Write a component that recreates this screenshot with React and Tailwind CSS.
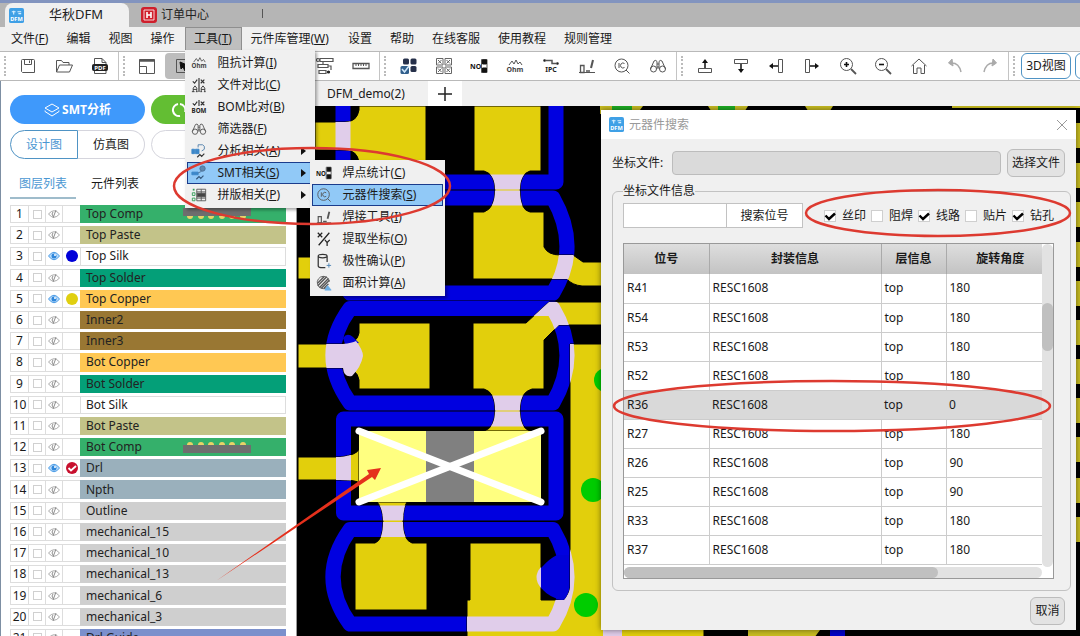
import { useState } from 'react';
import clsx from 'clsx';

const layers = [
  { name: 'Top Comp', color: 'bg-[#35b06b]', strip: 'top' },
  { name: 'Top Paste', color: 'bg-[#c3c389]' },
  { name: 'Top Silk', color: 'bg-white', visible: true, dot: 'bg-[#0000d8]' },
  { name: 'Top Solder', color: 'bg-[#049f78]' },
  { name: 'Top Copper', color: 'bg-[#ffc853]', visible: true, dot: 'bg-[#e0cf10]' },
  { name: 'Inner2', color: 'bg-[#997733]' },
  { name: 'Inner3', color: 'bg-[#997733]' },
  { name: 'Bot Copper', color: 'bg-[#ffc853]' },
  { name: 'Bot Solder', color: 'bg-[#049f78]' },
  { name: 'Bot Silk', color: 'bg-white' },
  { name: 'Bot Paste', color: 'bg-[#c3c389]' },
  { name: 'Bot Comp', color: 'bg-[#35b06b]', strip: 'bottom' },
  { name: 'Drl', color: 'bg-[#9ab0bc]', visible: true, active: true },
  { name: 'Npth', color: 'bg-[#9ab0bc]' },
  { name: 'Outline', color: 'bg-[#cfcfcf]' },
  { name: 'mechanical_15', color: 'bg-[#cfcfcf]' },
  { name: 'mechanical_10', color: 'bg-[#cfcfcf]' },
  { name: 'mechanical_13', color: 'bg-[#cfcfcf]' },
  { name: 'mechanical_6', color: 'bg-[#cfcfcf]' },
  { name: 'mechanical_3', color: 'bg-[#cfcfcf]' },
  { name: 'Drl Guide', color: 'bg-[#7b90cc]' },
];

const parts = [
  ['R41', 'RESC1608', 'top', '180'],
  ['R54', 'RESC1608', 'top', '180'],
  ['R53', 'RESC1608', 'top', '180'],
  ['R52', 'RESC1608', 'top', '180'],
  ['R36', 'RESC1608', 'top', '0'],
  ['R27', 'RESC1608', 'top', '180'],
  ['R26', 'RESC1608', 'top', '90'],
  ['R25', 'RESC1608', 'top', '90'],
  ['R33', 'RESC1608', 'top', '180'],
  ['R37', 'RESC1608', 'top', '180'],
];

const toolMenu = [
  { icon: 'ohm', label: '阻抗计算', hotkey: 'I' },
  { icon: 'compare', label: '文件对比', hotkey: 'C' },
  { icon: 'bom', label: 'BOM比对', hotkey: 'B' },
  { icon: 'binoculars', label: '筛选器', hotkey: 'F' },
  { icon: 'analysis', label: '分析相关', hotkey: 'A', sub: true },
  { icon: 'smt', label: 'SMT相关', hotkey: 'S', sub: true, active: true },
  { icon: 'panel', label: '拼版相关', hotkey: 'P', sub: true },
];

const smtMenu = [
  { icon: 'no', label: '焊点统计', hotkey: 'C' },
  { icon: 'ic', label: '元器件搜索', hotkey: 'S', active: true },
  { icon: 'iron', label: '焊接工具', hotkey: 'I' },
  { icon: 'xy', label: '提取坐标', hotkey: 'O' },
  { icon: 'polarity', label: '极性确认', hotkey: 'P' },
  { icon: 'area', label: '面积计算', hotkey: 'A' },
];

const toolbar = [
  { width: 'w-[119px]', icons: ['save', 'open', 'pdf'] },
  { width: 'w-[261px]', icons: ['layout', 'select', 'blank', 'blank', 'blank', 'route', 'ruler'] },
  { width: 'w-[297px]', icons: ['parts', 'grid', 'no', 'ohm', 'ipc', 'iron', 'ic', 'binoculars'] },
  { width: 'w-[332px]', icons: ['moveUp', 'moveDown', 'moveLeft', 'moveRight', 'zoomIn', 'zoomOut', 'home', 'undo', 'redo'] },
];

// all glyphs are drawn on an 18x18 grid
const glyphs = {
  blank: null,
  save: (
    <>
      <path d="M2.500 3.500a1 1 0 0 1 1-1h11a1 1 0 0 1 1 1v12h-12l-1-1z" />
      <path d="M5.500 2.500v5h7v-5M10.500 3.500v2.500" />
    </>
  ),
  open: (
    <>
      <path d="M1.500 15V3.500h5l1.500 2h6V8" />
      <path d="M1.500 15 4.500 8h13l-3 7z" />
    </>
  ),
  pdf: (
    <>
      <path d="M3.500 8V1.500h7.500l4 4V8M3.500 13v3.500h11.500V13M11 1.500v4h4" />
      <rect x="1.500" y="7.500" width="15" height="6" rx="1" fill="#222" stroke="#222" />
      <text x="9" y="12.500" fontSize="6" fontWeight="700" textAnchor="middle" fill="#fff" stroke="none">PDF</text>
    </>
  ),
  layout: (
    <>
      <path d="M1.500 2.500h15v14h-15zM1.500 9.500h7v7" />
      <path d="M1.500 3.500h15" strokeWidth="2.500" />
    </>
  ),
  select: (
    <>
      <path d="M2.500 2.500h13v13h-13z" />
      <path d="M6 5l7 3-3 1 3 4-2 1-2-4-2 2z" fill="#111" stroke="#111" />
    </>
  ),
  route: (
    <g strokeWidth="1.200">
      <circle cx="2" cy="3" r="1.500" />
      <path d="M4 1.500h13v3H4zM7 4.500v3M2 7.500h10v3H2zM12 9h3v4M3 13.500h7v3H3z" />
      <circle cx="12.500" cy="15" r="1" fill="#222" stroke="#222" />
    </g>
  ),
  ruler: (
    <>
      <path d="M1 6.500h16v5H1z" strokeWidth="1.300" />
      <path d="M4 7v2M6.500 7v2M9 7v2M11.500 7v2M14 7v2" />
    </>
  ),
  parts: (
    <g stroke="none" fill="#26304a">
      <rect x="4" y="1.500" width="6" height="6" rx="1.500" />
      <rect x="11.500" y="1.500" width="6" height="6" rx="1.500" />
      <rect x="11.500" y="9" width="6" height="6" rx="1.500" />
      <rect x="1.500" y="9" width="8.500" height="8" rx="1.500" fill="#315f8c" />
      <path d="M3 12l2.500 3L10 9" fill="none" stroke="#cfe6fa" strokeWidth="1.500" />
    </g>
  ),
  grid: (
    <g stroke="#666">
      <path d="M1.500 1.500h6.500v6.500h-6.500zM10 1.500h6.500v6.500h-6.500zM1.500 10h6.500v6.500h-6.500zM10 10h6.500v6.500h-6.500z" />
      <path d="M3 3l3.500 3.500M6.500 3 3 6.500M11.500 3l3.500 3.500M15 3l-3.500 3.500M3 11.500l3.500 3.500M6.500 11.500 3 15M11.500 11.500l3.500 3.500M15 11.500l-3.500 3.500" />
    </g>
  ),
  no: (
    <>
      <text x="0" y="12" fontSize="7" fontWeight="700" fill="#111" stroke="none">NO</text>
      <path d="M11.500 2.500h5.500v13h-5.500z" />
      <path d="M12.500 3h4v4h-4zM12.500 11h4v4h-4z" fill="#111" stroke="#111" />
    </>
  ),
  ohm: (
    <>
      <path d="M3 8l3-4 2 3 2-4 2 4 2-2 2 3" />
      <text x="9" y="14.500" fontSize="7" fontWeight="700" textAnchor="middle" fill="#444" stroke="none">Ohm</text>
    </>
  ),
  ipc: (
    <>
      <path d="M2 3.500h8v3h6" strokeWidth="1.500" />
      <circle cx="2.500" cy="3.500" r="1" fill="#222" />
      <circle cx="15.500" cy="6.500" r="1" fill="#222" />
      <text x="9" y="15" fontSize="7" fontWeight="700" textAnchor="middle" fill="#222" stroke="none">IPC</text>
    </>
  ),
  iron: (
    <>
      <path d="M1 15.500h16" />
      <path d="M2.500 8.500h3.500v7h-3.500zM8 14h4" strokeWidth="1.300" />
      <path d="M15 3l-2 8" strokeWidth="2" />
    </>
  ),
  ic: (
    <>
      <circle cx="8.500" cy="8.500" r="6.500" />
      <path d="M13 13l3.500 3.500M6 6v5M11.500 6.500a2.500 2.500 0 1 0 0 4" />
    </>
  ),
  binoculars: (
    <>
      <circle cx="4.500" cy="12" r="3" />
      <circle cx="13.500" cy="12" r="3" />
      <path d="M1.500 12 5 4q2-1.500 3 .5V12M16.500 12 13 4q-2-1.500-3 .5V12M8 7h2M8 10h2" />
    </>
  ),
  moveUp: (
    <>
      <path d="M2.500 11.500h13v4h-13z" />
      <path d="M9 11V4" stroke="#111" strokeWidth="1.500" />
      <path d="M9 2l3 4H6z" fill="#111" stroke="none" />
    </>
  ),
  moveDown: (
    <>
      <path d="M2.500 2.500h13v4h-13z" />
      <path d="M9 7v6" stroke="#111" strokeWidth="1.500" />
      <path d="M9 16l3-4H6z" fill="#111" stroke="none" />
    </>
  ),
  moveLeft: (
    <>
      <path d="M11.500 2.500h4v13h-4z" />
      <path d="M11 9H5" stroke="#111" strokeWidth="1.500" />
      <path d="M2 9l4-3v6z" fill="#111" stroke="none" />
    </>
  ),
  moveRight: (
    <>
      <path d="M2.500 2.500h4v13h-4z" />
      <path d="M7 9h6" stroke="#111" strokeWidth="1.500" />
      <path d="M16 9l-4-3v6z" fill="#111" stroke="none" />
    </>
  ),
  zoomIn: (
    <>
      <circle cx="7.500" cy="7.500" r="6" />
      <path d="M12 12l5 5" strokeWidth="1.800" />
      <path d="M5 7.500h5M7.500 5v5" stroke="#111" strokeWidth="1.600" />
    </>
  ),
  zoomOut: (
    <>
      <circle cx="7.500" cy="7.500" r="6" />
      <path d="M12 12l5 5" strokeWidth="1.800" />
      <path d="M5 7.500h5" stroke="#111" strokeWidth="1.600" />
    </>
  ),
  home: (
    <path d="M1.500 9 9 2l7.500 7M3.500 8v8.500h3.500v-5.500h4v5.500h3.500V8" />
  ),
  undo: (
    <g stroke="#aaa">
      <path d="M4 6q9-1 11 9" strokeWidth="1.500" />
      <path d="M6 2 2.500 6 7 9z" fill="#aaa" />
    </g>
  ),
  redo: (
    <g stroke="#aaa">
      <path d="M14 6Q5 5 3 15" strokeWidth="1.500" />
      <path d="M12 2l3.500 4L11 9z" fill="#aaa" />
    </g>
  ),
  compare: (
    <g stroke="#333">
      <path d="M9 1v16M2 5l2 2 3-4M11 3l4 4M15 3l-4 4" strokeWidth="1.300" />
      <path d="M2.500 16.500v-4l2-2.500 2 2.500v4M11.500 16.500v-4l2-2.500 2 2.500v4M2.500 14h4M11.500 14h4M1 16.500h3M5.500 16.500h2M10.500 16.500h2M14.500 16.500h2" />
    </g>
  ),
  bom: (
    <>
      <path d="M2 5l2 2 3-4M9 1v7M11 3l4 4M15 3l-4 4" stroke="#333" strokeWidth="1.300" />
      <text x="9" y="16" fontSize="7" fontWeight="700" textAnchor="middle" fill="#222" stroke="none">BOM</text>
    </>
  ),
  analysis: (
    <>
      <path d="M1 7h3v5H1zM5 7h4v5H5z" fill="#3c87c9" stroke="#3c87c9" />
      <path d="M8 2h5q3 1 2 5l-3 2M8 2v3" stroke="#4c7ca8" />
      <path d="M7 16l3-3 2 2 3-3" stroke="#333" strokeWidth="1.300" />
    </>
  ),
  smt: (
    <>
      <path d="M1 8h7v3H1z" fill="#3c87c9" stroke="#3c87c9" />
      <circle cx="13" cy="4" r="3" fill="#5d88b0" stroke="#4b6f94" />
      <path d="M8 9l4-2" stroke="#4b6f94" />
      <path d="M6 16l3-3 2 2 3-3" stroke="#33567a" strokeWidth="1.300" />
    </>
  ),
  panel: (
    <>
      <path d="M6.500 2.500h10v13h-10zM6.500 5.500h10M11.500 2.500v13M6.500 12.500h10" />
      <path d="M7 7h9v4H7z" fill="#444" />
      <path d="M1.500 6.500h3v3h-3zM1.500 12.500h3v3h-3z" stroke="#2f9c56" />
      <path d="M2 3h2" stroke="#2f9c56" strokeWidth="2" />
    </>
  ),
  xy: (
    <path d="M2 2l5 5M7 2 2 7M15 2 3 16M10 10l2.500 3 3-3M12.500 13v4" stroke="#222" strokeWidth="1.400" />
  ),
  polarity: (
    <>
      <path d="M2.500 3.500v11q0 2 5 2h3M2.500 3.500q0-2 5-2t5 2q0 2-5 2t-5-2M12.500 3.500V10" stroke="#333" strokeWidth="1.400" />
      <path d="M12 14h5M14.500 11.500v5" stroke="#4c83b5" />
    </>
  ),
  area: (
    <>
      <path d="M8 1.500a7 7 0 1 0 4 13M8 1.500q6 0 7 6" />
      <path d="M2 9l7-7M2 12 12 2M4 14 14 4M6 15l9-9M9 15l5-5" strokeWidth="1.500" />
      <path d="M10 17l3-5 4 5z" fill="#6eb0e6" stroke="#6eb0e6" />
    </>
  ),
};

function Glyph({ name, className }) {
  return (
    <svg viewBox="0 0 18 18" className={className} fill="none" stroke="#555" strokeWidth="1" aria-hidden="true">
      {glyphs[name]}
    </svg>
  );
}

function Logo({ className }) {
  return (
    <svg viewBox="0 0 16 16" className={className} aria-hidden="true">
      <rect width="16" height="16" rx="2" fill="#3fa0e6" />
      <path d="M3 4h4M5 3v4M9 4h4M10 6h3" stroke="#d9efff" strokeWidth="1.200" />
      <text x="8" y="13.500" fontSize="6" fontWeight="700" textAnchor="middle" fill="#fff">DFM</text>
    </svg>
  );
}

function TitleBar() {
  return (
    <div className="flex h-[27px] flex-none items-stretch border-t-[3px] border-[#8294bf] bg-[#b5b5b5] pl-[5px]">
      <button className="flex w-[124px] items-center rounded-t-lg bg-[#f0f0f0] pl-1 text-[13px] text-[#222]">
        <Logo className="mr-[25px] h-[15px] w-[15px]" />
        华秋DFM
      </button>
      <button className="flex items-center gap-1 pl-[12px] text-xs text-[#222]">
        <svg viewBox="0 0 16 16" className="h-4 w-4" aria-hidden="true">
          <rect width="16" height="16" rx="3" fill="#cf1f2c" />
          <path d="M3 3h10v10H3z" fill="none" stroke="#fff" strokeWidth=".8" />
          <path d="M6 5v6M10 5v6M6 8h4" stroke="#fff" strokeWidth="1.600" />
        </svg>
        订单中心
      </button>
      <span className="ml-[53px] mt-[6px] h-[9px] w-px bg-[#555]" />
    </div>
  );
}

function MenuList({ items, className, children }) {
  return (
    <div role="menu" className={clsx('absolute bg-[#f0f0f0] p-0.5 shadow-[2px_2px_3px_rgba(0,0,0,0.35)]', className)}>
      {items.map((item) => (
        <button
          key={item.label}
          role="menuitem"
          className={clsx(
            'flex h-[22px] w-full items-center border pl-[3px] pr-[3px] text-left whitespace-nowrap',
            item.active ? 'border-[#1b3c8c] bg-[#91c9f7]' : 'border-transparent'
          )}
        >
          <Glyph name={item.icon} className="mr-[11px] h-4 w-4" />
          <span>
            {item.label}(<u>{item.hotkey}</u>)
          </span>
          {item.sub && (
            <svg viewBox="0 0 5 8" className="ml-auto mr-[3px] h-2 w-[5px]" aria-hidden="true">
              <path d="M0 0l5 4-5 4z" fill="#111" />
            </svg>
          )}
        </button>
      ))}
      {children}
    </div>
  );
}

function MenuBar() {
  return (
    <nav className="flex h-6 flex-none items-stretch pl-0.5">
      <button className="px-[9px]">文件(<u>F</u>)</button>
      <button className="px-[9px]">编辑</button>
      <button className="px-[9px]">视图</button>
      <button className="pl-[9px] pr-[10px]">操作</button>
      <div className="relative z-20 flex">
        <button className="w-[57px] border border-[#8f8f8f] bg-[#bfbfbf]">工具(<u>T</u>)</button>
        <MenuList items={toolMenu} className="left-0 top-[23px] w-[130px]">
          <MenuList items={smtMenu} className="left-[125px] top-[110px] w-[135px]" />
        </MenuList>
      </div>
      <button className="px-[9px]">元件库管理(<u>W</u>)</button>
      <button className="pl-[10px] pr-[9px]">设置</button>
      <button className="px-[9px]">帮助</button>
      <button className="px-[9px]">在线客服</button>
      <button className="px-[9px]">使用教程</button>
      <button className="px-[9px]">规则管理</button>
    </nav>
  );
}

function ToolBar() {
  return (
    <div className="flex h-[30px] flex-none overflow-hidden border-y border-[#b9b9b9] bg-white">
      {toolbar.map((group) => (
        <div key={group.width} className={clsx('flex flex-none items-center border-r border-[#c4c4c4] pl-1', group.width)}>
          <span className="mr-1 h-5 border-l-2 border-dotted border-[#bbb]" />
          {group.icons.map((icon, i) => (
            <button
              key={i}
              aria-label={icon}
              className={clsx('flex h-[26px] flex-1 items-center justify-center rounded', icon === 'select' && 'bg-[#bdbdbd]')}
            >
              <Glyph name={icon} className="h-[18px] w-[18px]" />
            </button>
          ))}
        </div>
      ))}
      <span className="ml-1 mr-[6px] h-5 flex-none self-center border-l-2 border-dotted border-[#bbb]" />
      <button className="h-[26px] w-[50px] flex-none self-center rounded-md border border-[#4f93c4] whitespace-nowrap">3D视图</button>
      <button aria-label="2D" className="ml-1 h-[26px] w-[50px] flex-none self-center rounded-md border border-[#4f93c4]" />
    </div>
  );
}

function Eye({ open }) {
  return (
    <svg viewBox="0 0 12 10" className="h-[10px] w-3" fill="none" aria-hidden="true">
      {open ? (
        <>
          <path d="M.5 5Q6-2.500 11.500 5 6 12.500.5 5z" fill="#b9dcfb" stroke="#4a9be6" />
          <circle cx="6" cy="5" r="2.500" fill="#2f86da" />
          <circle cx="7" cy="4" r="1" fill="#fff" />
        </>
      ) : (
        <>
          <path d="M.5 5Q6-1.500 11.500 5 6 11.500.5 5z" stroke="#a9a9a9" />
          <path d="M5 3q-2 2 0 4M8 1 5 9" stroke="#8d8d8d" />
        </>
      )}
    </svg>
  );
}

// board edge with pads, facing down on the top side and up on the bottom side
function PadStrip({ side }) {
  const top = side === 'top';
  return (
    <svg viewBox="0 0 68 12" className="ml-auto mr-[34px] h-3 w-[68px]" aria-hidden="true">
      {[7, 18, 28, 39, 49, 60].map((x) => (
        <circle key={x} cx={x} cy={top ? 8 : 4} r="3" fill="#e9d268" />
      ))}
      <rect y={top ? 0 : 4} width="68" height="8" fill="#6e6e6e" />
    </svg>
  );
}

function LayerRow({ layer, index }) {
  return (
    <li className="mb-[3px] flex items-stretch">
      <span className="flex w-[19px] items-center justify-center border border-[#ddd]">{index + 1}</span>
      <span className="flex w-[17px] items-center justify-center border-y border-r border-[#ddd]">
        <input type="checkbox" aria-label={layer.name} className="h-[9px] w-[9px] appearance-none border border-[#d0d0d0] bg-white checked:bg-[#4a9be6]" />
      </span>
      <button aria-label="toggle layer" className="flex w-[17px] items-center justify-center border-y border-r border-[#ddd]">
        <Eye open={layer.visible} />
      </button>
      <span className="flex w-[17px] items-center justify-center border-y border-[#ddd]">
        {layer.dot && <i className={clsx('h-3 w-3 rounded-full', layer.dot)} />}
        {layer.active && (
          <svg viewBox="0 0 12 12" className="h-3 w-3" aria-hidden="true">
            <circle cx="6" cy="6" r="6" fill="#c8102e" />
            <path d="M2.500 6 5 8.500 10 4" fill="none" stroke="#fff" strokeWidth="1.800" />
          </svg>
        )}
      </span>
      <span className={clsx('flex flex-1 items-center border pl-[5px] text-[#222]', layer.color, layer.color === 'bg-white' ? 'border-[#ddd]' : 'border-transparent')}>
        {layer.name}
        {layer.strip && <PadStrip side={layer.strip} />}
      </span>
    </li>
  );
}

function Sidebar() {
  const [tab, setTab] = useState('layers');

  return (
    <aside className="flex w-[297px] flex-none flex-col overflow-hidden border-l border-r border-l-[#7d8fa3] border-r-[#999] bg-white pl-[9px] pr-[10px] pt-[14px]">
      <div className="flex flex-none gap-[6px]">
        <button className="flex h-[29px] w-[135px] items-center justify-center gap-0.5 rounded-full bg-[#3f99fb] font-bold text-white">
          <svg viewBox="0 0 16 16" className="h-4 w-4" fill="none" stroke="#fff" aria-hidden="true">
            <path d="M8 2 1 6l7 4 7-4zM1 8.500v1L8 14l7-4.500v-1" />
          </svg>
          SMT分析
        </button>
        <button aria-label="refresh" className="flex h-[29px] flex-1 items-center rounded-full bg-[#63be33] pl-5">
          <svg viewBox="0 0 16 16" className="h-4 w-4" fill="none" stroke="#fff" strokeWidth="2" aria-hidden="true">
            <path d="M7 2a6 6 0 0 0 2 12M9 2a6 6 0 0 1 5 8" />
          </svg>
        </button>
      </div>
      <div className="mt-[6px] flex flex-none gap-[6px]">
        <div className="flex h-[29px] w-[135px]">
          <button className="w-[68px] rounded-l-full border border-[#4f93c4] text-[#4a97d2]">设计图</button>
          <button className="flex-1 rounded-r-full border border-l-0 border-[#d5d5dd]">仿真图</button>
        </div>
        <button aria-label="more" className="h-[29px] flex-1 rounded-full border border-[#d5d5dd]" />
      </div>
      <div className="mt-[12px] flex flex-none" role="tablist">
        {[['layers', '图层列表'], ['parts', '元件列表']].map(([id, label]) => (
          <button
            key={id}
            role="tab"
            onClick={() => setTab(id)}
            className={clsx('h-7 w-[66px] border-b-2', tab === id ? 'border-[#9fbccb] text-[#4a97d2]' : 'border-transparent', id === 'parts' && 'ml-[6px]')}
          >
            {label}
          </button>
        ))}
      </div>
      <ul className="mt-[6px] grid h-[445px] flex-none auto-rows-fr">
        {layers.map((layer, i) => (
          <LayerRow key={layer.name} layer={layer} index={i} />
        ))}
      </ul>
    </aside>
  );
}

function SilkRings() {
  return (
    <g fill="none" strokeWidth="15" strokeLinejoin="round">
      <path d="M343 90V182H556V90" />
      <path d="M350 198H553Q581 247 553 293H350Q322 247 350 198z" />
      <path d="M350 308.500H553Q581 355 553 403H350Q316 355 350 308.500z" />
      <path d="M343.500 419H556V513H343.500z" />
      <path d="M350 529.500H553Q581 577 553 624H350Q316 577 350 529.500z" />
    </g>
  );
}

const copperPath = [
  'M315 122H345Q357 122 359 110V106H426V170H359V162Q357 150 345 150H315z',
  'M474 106H541V171H530Q520 174 520 190Q520 210 530 212H544V247Q548 255 560 255H573L583 262H610V286H582Q572 285 567 279H473V212H484Q495 208 495 190Q495 174 484 171H474z',
  'M298 257H330V279H298z',
  'M298 344H343Q357 344 359 333V323H430V389H359V380Q357 368 343 368H298z',
  'M473 323H526L549 302H610V325H559L544 340V389H532Q520 392 520 410Q520 428 530 431H484Q495 428 495 410Q495 392 484 389H473z',
  'M298 457H340Q357 455 359 449V483Q357 480 340 480H298z',
  'M377 502H407Q403 508 403 522Q403 540 412 543H427V610H355V543H375Q383 540 383 522Q383 508 377 502z',
  'M470 543H541V600H564Q569 594 570 588V344H704V640H467V600H470z',
].join('');

const edgePads = [123, 163, 202, 242, 281, 320, 359, 398, 437, 478, 517];

function Board() {
  return (
    <svg viewBox="297 106 783 530" preserveAspectRatio="xMinYMin slice" className="h-full w-full bg-black" aria-label="PCB">
      <defs>
        <clipPath id="copper">
          <path d={copperPath} />
        </clipPath>
      </defs>
      <g stroke="#0000e0"><SilkRings /></g>
      <path d={copperPath} fill="#e2cf0c" stroke="#000" strokeWidth="1" />
      <g stroke="#e0cdea" clipPath="url(#copper)"><SilkRings /></g>
      {/* round markers where a trace meets the silk */}
      <path d="M343 338Q347 332 353 337L359 343 345 344z" fill="#0000d8" />
      <path d="M327 344H343Q352 343 356 341 363 350 363 356 361 367 352 376 344 378 343 368H327z" fill="#e0cdea" />
      <path d="M541 567Q532 577 541 588z" fill="#e0cdea" />
      <path d="M569 555V590Q566 600 562 600 550 598 541 588V568Q550 558 557 555z" fill="#0000d8" />

      {/* selected component */}
      <path d="M359 431h182v71H359z" fill="#ffff80" />
      <path d="M426 431h48v71h-48z" fill="#808080" />
      <path d="M359 431l182 71M541 431l-182 71" stroke="#fff" strokeWidth="7" strokeLinecap="round" />

      <g fill="#00cc00">
        <circle cx="606" cy="380" r="12" />
        <circle cx="593" cy="490" r="12" />
        <circle cx="586" cy="605" r="12" />
      </g>
      <path d="M600 106h43l-6 8h-37zM708 106h40l-5 8h-30zM805 106h28l-5 8h-18zM952 106h128v2H952zM748 630h72l-6 8h-66z" fill="#c9bd22" />
      <path d="M612 106h20v6h-20zM718 106h17v6h-17z" fill="#1fae24" />
      <path d="M603 630h19v6h-19z" fill="#e0cdea" />
      <path d="M830 630h15v6h-15z" fill="#0000c8" />
      {edgePads.map((y) => (
        <rect key={y} x="1070" y={y} width="12" height="25" fill="#c9bd22" />
      ))}
    </svg>
  );
}

function FilterBox({ label, defaultChecked }) {
  return (
    <label className="flex w-[47px] items-center gap-[6px] whitespace-nowrap">
      <span className="grid flex-none">
        <input type="checkbox" defaultChecked={defaultChecked} className="peer col-start-1 row-start-1 h-3 w-3 appearance-none border border-[#cfcfcf] bg-white" />
        <svg viewBox="0 0 12 12" className="pointer-events-none col-start-1 row-start-1 hidden h-3 w-3 peer-checked:block" aria-hidden="true">
          <path d="M1.500 5.500 5 9l6-5.500" fill="none" stroke="#000" strokeWidth="2.400" />
        </svg>
      </span>
      {label}
    </label>
  );
}

function SearchDialog() {
  return (
    <div role="dialog" aria-label="元器件搜索" className="absolute bottom-[6px] right-1 top-1 flex w-[475px] flex-col bg-[#f0f0f0] shadow-[0_0_6px_rgba(0,0,0,0.5)]">
      <header className="flex h-[29px] flex-none items-center bg-white pl-2 pr-[9px] text-[#999]">
        <Logo className="mr-[5px] h-[15px] w-[15px]" />
        元器件搜索
        <button aria-label="close" className="ml-auto">
          <svg viewBox="0 0 10 10" className="h-[10px] w-[10px]" stroke="#999" aria-hidden="true">
            <path d="M0 0l10 10M10 0 0 10" />
          </svg>
        </button>
      </header>
      <div className="flex min-h-0 flex-1 flex-col px-[11px] pt-[10px] pb-[5px]">
        <div className="flex flex-none items-center">
          <label htmlFor="coord" className="w-[60px]">坐标文件:</label>
          <input id="coord" readOnly className="h-6 min-w-0 flex-1 rounded border border-[#bcbcbc] bg-[#dadada]" />
          <button className="ml-[6px] h-7 w-[58px] rounded-md border border-[#bcbcbc] bg-[#e3e3e3] whitespace-nowrap">选择文件</button>
        </div>

        <fieldset className="mt-[6px] flex min-h-0 flex-1 flex-col rounded-md border border-[#c2c2c2] pb-[11px] pl-[10px] pr-[11px]">
          <legend className="leading-4">坐标文件信息</legend>
          <div className="mt-[4px] flex flex-none items-center">
            <input aria-label="位号" className="h-[25px] w-[104px] border border-[#c2c2c2] bg-white px-1" />
            <button className="-ml-px h-[25px] w-[77px] border border-[#c2c2c2] bg-white">搜索位号</button>
            <div className="ml-[21px] flex">
              <FilterBox label="丝印" defaultChecked />
              <FilterBox label="阻焊" />
              <FilterBox label="线路" defaultChecked />
              <FilterBox label="贴片" />
              <FilterBox label="钻孔" defaultChecked />
            </div>
          </div>

          <div className="mr-[5px] mt-[15px] flex min-h-0 flex-1 border border-[#999] bg-white">
            <div className="flex min-w-0 flex-1 flex-col">
              <div className="min-h-0 flex-1 overflow-hidden">
                <table className="w-full table-fixed border-collapse">
                  <colgroup>
                    <col className="w-[85px]" />
                    <col className="w-[172px]" />
                    <col className="w-[65px]" />
                    <col />
                  </colgroup>
                  <thead>
                    <tr className="h-[30px] bg-linear-to-b from-[#dedede] to-[#c3c3c3]">
                      <th className="border-r border-[#aaa]">位号</th>
                      <th className="border-r border-[#aaa]">封装信息</th>
                      <th className="border-r border-[#aaa]">层信息</th>
                      <th className="pl-3">旋转角度</th>
                    </tr>
                  </thead>
                  <tbody>
                    {parts.map((row) => (
                      <tr key={row[0]} className={clsx('h-[29px] border-b border-[#ccc]', row[0] === 'R36' && 'bg-[#d9d9d9]')}>
                        {row.map((cell, i) => (
                          <td key={i} className={clsx('pl-[3px]', i < 3 && row[0] !== 'R36' && 'border-r border-[#ccc]')}>{cell}</td>
                        ))}
                      </tr>
                    ))}
                  </tbody>
                </table>
              </div>
              <div className="h-[11px] flex-none rounded-full bg-[#e2e2e2]">
                <div className="h-full w-3/4 rounded-full bg-[#c0c0c0]" />
              </div>
            </div>
            <div className="mb-[11px] w-[11px] flex-none rounded-full bg-[#e2e2e2] pt-[59px]">
              <div className="h-12 rounded-full bg-[#c0c0c0]" />
            </div>
          </div>
        </fieldset>
        <button className="mt-[6px] h-7 w-[35px] flex-none self-end rounded-md border border-[#bcbcbc] bg-[#e3e3e3]">取消</button>
      </div>
    </div>
  );
}

function Marks() {
  return (
    <svg viewBox="0 0 1080 636" preserveAspectRatio="xMinYMin slice" className="pointer-events-none absolute inset-0 z-30 h-full w-full" fill="none" stroke="#dd3a30" strokeWidth="2.500" aria-hidden="true">
      <ellipse cx="312" cy="186" rx="138" ry="38" />
      <ellipse cx="938" cy="213" rx="132" ry="23" />
      <ellipse cx="832" cy="406" rx="218" ry="25" />
      <path d="M216 581 369 474 367 470 381 468 375 480 372 477z" fill="#e5301c" stroke="none" />
    </svg>
  );
}

export default function App() {
  return (
    <div className="relative flex h-screen flex-col overflow-hidden bg-[#f0f0f0] font-['Noto_Sans','Noto_Sans_CJK_SC',sans-serif] text-xs text-[#1a1a1a]">
      <TitleBar />
      <MenuBar />
      <ToolBar />
      <div className="flex min-h-0 flex-1">
        <Sidebar />
        <main className="flex min-w-0 flex-1 flex-col">
          <div className="flex h-[25px] flex-none items-stretch pl-[30px]">
            <button className="w-[101px] text-left">DFM_demo(2)</button>
            <button aria-label="new tab" className="flex w-[34px] items-center justify-center bg-white">
              <svg viewBox="0 0 14 14" className="h-[14px] w-[14px]" stroke="#222" strokeWidth="1.500" aria-hidden="true">
                <path d="M7 0v14M0 7h14" />
              </svg>
            </button>
          </div>
          <div className="relative min-h-0 flex-1 overflow-hidden">
            <Board />
            <SearchDialog />
          </div>
        </main>
      </div>
      <Marks />
    </div>
  );
}
